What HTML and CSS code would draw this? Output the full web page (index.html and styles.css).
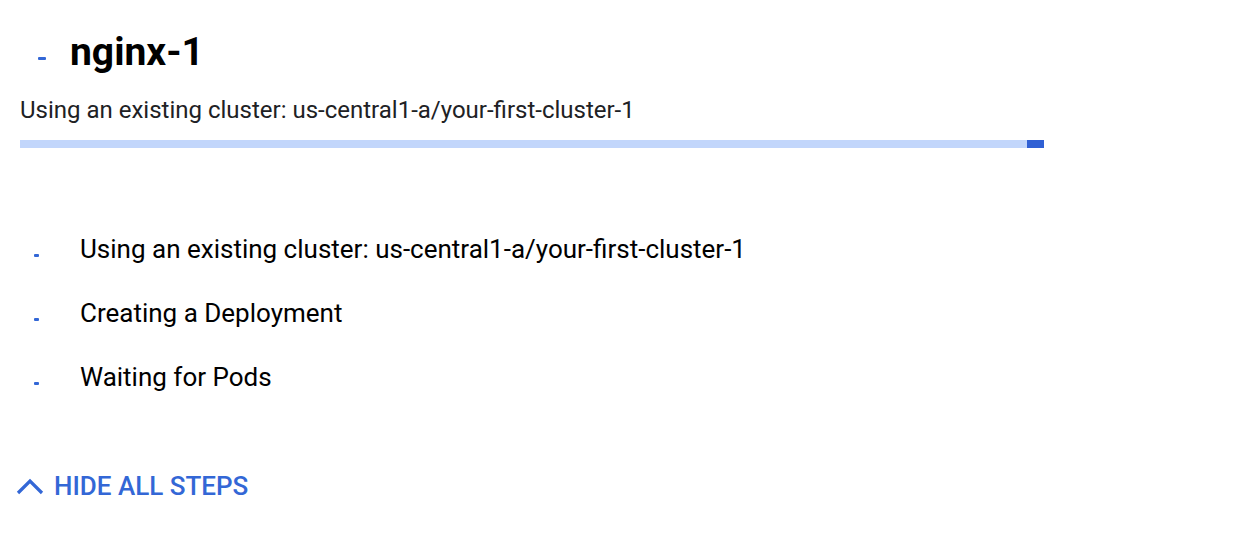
FILE: index.html
```html
<!DOCTYPE html>
<html>
<head>
<meta charset="utf-8">
<link rel="stylesheet" href="styles.css">
</head>
<body>
<div class="page">
  <div class="title-row">
    <span class="spinner spinner-lg"></span>
    <h1 class="title">nginx-1</h1>
  </div>
  <div class="subtitle">Using an existing cluster: us-central1-a/your-first-cluster-1</div>
  <div class="progress"><div class="progress-fill"></div></div>
  <ul class="steps">
    <li class="step"><span class="spinner spinner-sm"></span><span class="step-text">Using an existing cluster: us-central1-a/your-first-cluster-1</span></li>
    <li class="step"><span class="spinner spinner-sm"></span><span class="step-text">Creating a Deployment</span></li>
    <li class="step"><span class="spinner spinner-sm"></span><span class="step-text">Waiting for Pods</span></li>
  </ul>
  <button class="toggle">
    <svg class="chev" width="28" height="18" viewBox="0 0 28 18"><path d="M2 16 L14 4 L26 16" fill="none" stroke="#3367d6" stroke-width="3.2"/></svg>
    <span>HIDE ALL STEPS</span>
  </button>
</div>
</body>
</html>
```
FILE: styles.css
```css
html, body { margin: 0; padding: 0; background: #fff; }
body { font-family: Roboto, "Noto Sans", sans-serif; color: #202124; }
.page { padding: 26px 0 0 20px; width: 1024px; }
.title-row { display: flex; align-items: center; height: 52px; }
.spinner { display: inline-block; background: #3367d6; border-radius: 1px; }
.spinner-lg { width: 8px; height: 3px; margin-left: 18px; margin-right: 24px; margin-top: 12px; }
.title { margin: 0; font-size: 39px; font-weight: 700; color: #000; letter-spacing: 0; line-height: 52px; }
.subtitle { margin-top: 18px; font-size: 24px; line-height: 28px; color: #202124; }
.progress { margin-top: 16px; height: 8px; background: #c2d6fb; display: flex; justify-content: flex-end; }
.progress-fill { width: 17px; height: 8px; background: #3060d4; }
.steps { list-style: none; margin: 69px 0 0 0; padding: 0; }
.step { display: flex; align-items: center; height: 64px; }
.spinner-sm { width: 5px; height: 3px; margin-left: 14px; margin-right: 41px; margin-top: 12px; }
.step-text { font-size: 26px; color: #000; }
.toggle { margin-top: 62px; margin-left: -4px; display: flex; align-items: center; height: 30px; background: none; border: 0; padding: 0; cursor: pointer; font-family: Roboto, sans-serif; font-size: 26px; font-weight: 500; color: #3367d6; }
.chev { margin-right: 10px; }
```
